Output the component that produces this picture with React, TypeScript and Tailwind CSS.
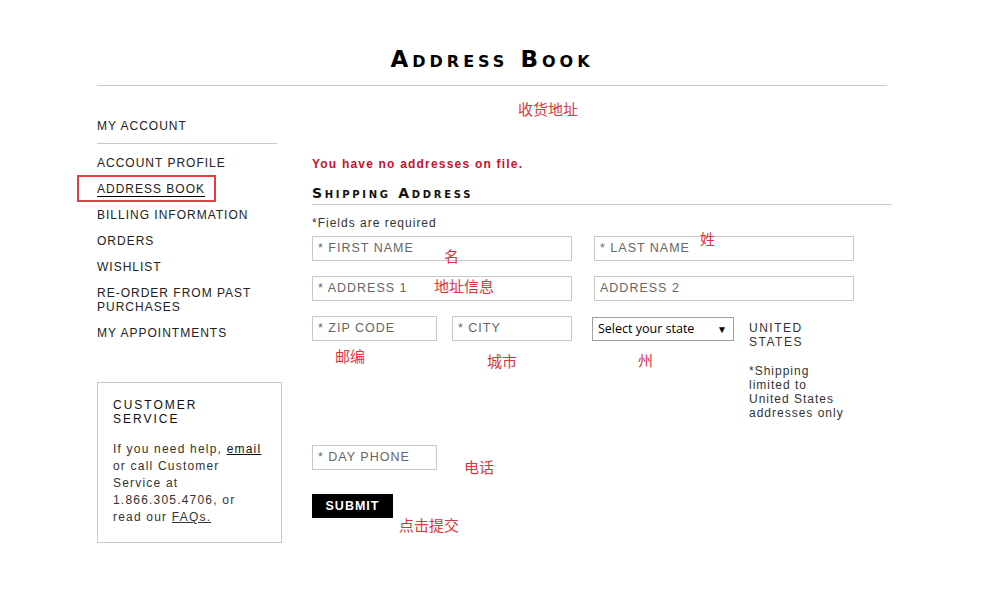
import React from "react";

const font = { fontFamily: '"Liberation Sans", Arial, sans-serif' };
const cjk = { fontFamily: '"Noto Sans CJK SC", "Noto Sans", sans-serif' };

const menuItems = [
  "ACCOUNT PROFILE",
  "ADDRESS BOOK",
  "BILLING INFORMATION",
  "ORDERS",
  "WISHLIST",
  "RE-ORDER FROM PAST PURCHASES",
  "MY APPOINTMENTS",
];

function Field({ label, w }: { label: string; w: string }) {
  return (
    <div
      className={`${w} h-[25px] border border-[#c8c8c8] flex items-center pl-[5px] text-[12.5px] tracking-[1px] text-[#666] bg-white`}
    >
      {label}
    </div>
  );
}

// red notes written over the screenshot
const notes = [
  { text: "收货地址", cls: "left-[518px] top-[99px]" },
  { text: "名", cls: "left-[444px] top-[246px]" },
  { text: "姓", cls: "left-[700px] top-[229px]" },
  { text: "地址信息", cls: "left-[434px] top-[276px]" },
  { text: "邮编", cls: "left-[335px] top-[346px]" },
  { text: "城市", cls: "left-[487px] top-[351px]" },
  { text: "州", cls: "left-[638px] top-[350px]" },
  { text: "电话", cls: "left-[464px] top-[457px]" },
  { text: "点击提交", cls: "left-[399px] top-[515px]" },
];

export default function App() {
  return (
    <div className="relative w-[998px] h-[602px] bg-white text-[#222]" style={font}>
      <div className="pt-[44px] ml-[97px] w-[790px]">
        <h1
          className="text-center text-[23px] leading-[30px] tracking-[4px] text-black font-bold"
          style={{ fontFamily: '"DejaVu Sans", sans-serif', fontVariant: "small-caps" }}
        >
          Address Book
        </h1>
        <div className="mt-[11px] border-t border-[#c8c8c8]" />

        <div className="flex gap-[30px]">
          {/* left nav */}
          <div className="w-[185px] shrink-0">
            <div className="mt-[33px] pr-[5px]">
              <div className="text-[12px] leading-[14px] tracking-[1px] pb-[10px] border-b border-[#c8c8c8]">
                MY ACCOUNT
              </div>
              <ul className="mt-[12px] flex flex-col gap-[12px]">
                {menuItems.map((item) => (
                  <li key={item} className="relative text-[12px] leading-[14px] tracking-[1px]">
                    {item === "ADDRESS BOOK" ? (
                      <>
                        <span className="border-b border-black">{item}</span>
                        <span className="absolute left-[-20px] top-[-7px] w-[139px] h-[27px] border-2 border-[#e0403f]" />
                      </>
                    ) : (
                      item
                    )}
                  </li>
                ))}
              </ul>
            </div>

            <div className="mt-[42px] border border-[#c8c8c8] px-[15px] pt-[15px] pb-[16px]">
              <div className="text-[12px] leading-[14px] tracking-[2px] text-[#111]">
                CUSTOMER SERVICE
              </div>
              <p className="mt-[15px] text-[12px] leading-[17px] tracking-[1.2px] text-[#333]">
                If you need help, <span className="underline text-[#111]">email</span> or call Customer
                Service at 1.866.305.4706, or read our <span className="underline">FAQs.</span>
              </p>
            </div>
          </div>

          {/* main form */}
          <div className="w-[580px] shrink-0">
            <div className="mt-[70px] text-[12px] leading-[16px] tracking-[1.2px] font-bold text-[#c8102e]">
              You have no addresses on file.
            </div>
            <div
              className="mt-[13px] pb-[3px] border-b border-[#c8c8c8] text-[14px] leading-[16px] tracking-[2.7px] font-bold text-[#111]"
              style={{ fontFamily: '"DejaVu Sans", sans-serif', fontVariant: "small-caps" }}
            >
              Shipping Address
            </div>
            <div className="mt-[10px] text-[12px] leading-[16px] tracking-[1px] text-[#333]">
              *Fields are required
            </div>

            <div className="mt-[5px] flex flex-col gap-[15px]">
              <div className="flex gap-[22px]">
                <Field label="* FIRST NAME" w="w-[260px]" />
                <Field label="* LAST NAME" w="w-[260px]" />
              </div>
              <div className="flex gap-[22px]">
                <Field label="* ADDRESS 1" w="w-[260px]" />
                <Field label="ADDRESS 2" w="w-[260px]" />
              </div>
              <div className="flex items-start">
                <Field label="* ZIP CODE" w="w-[125px]" />
                <div className="ml-[15px]">
                  <Field label="* CITY" w="w-[120px]" />
                </div>
                <div
                  className="ml-[20px] mt-[1px] w-[142px] h-[24px] border border-[#a0a0a0] flex items-center justify-between pl-[5px] pr-[6px] text-[12.5px] text-black"
                  style={{ fontFamily: '"Open Sans", sans-serif' }}
                >
                  <span>Select your state</span>
                  <span className="text-[10px]">▼</span>
                </div>
                <div className="ml-[15px] text-[12px] tracking-[1px] text-[#333]">
                  <div className="mt-[5px] leading-[14px] tracking-[1.5px]">
                    UNITED
                    <br />
                    STATES
                  </div>
                  <div className="mt-[15px] leading-[14px] w-[100px]">
                    *Shipping limited to United States addresses only
                  </div>
                </div>
              </div>
            </div>

            <div className="mt-[25px]">
              <Field label="* DAY PHONE" w="w-[125px]" />
            </div>
            <button className="mt-[24px] w-[81px] h-[24px] bg-black text-white text-[12.5px] font-bold tracking-[1px] flex items-center justify-center">
              SUBMIT
            </button>
          </div>
        </div>
      </div>

      {notes.map((n) => (
        <span
          key={n.text}
          className={`absolute ${n.cls} text-[15px] leading-[20px] text-[#d9363e]`}
          style={cjk}
        >
          {n.text}
        </span>
      ))}
    </div>
  );
}
